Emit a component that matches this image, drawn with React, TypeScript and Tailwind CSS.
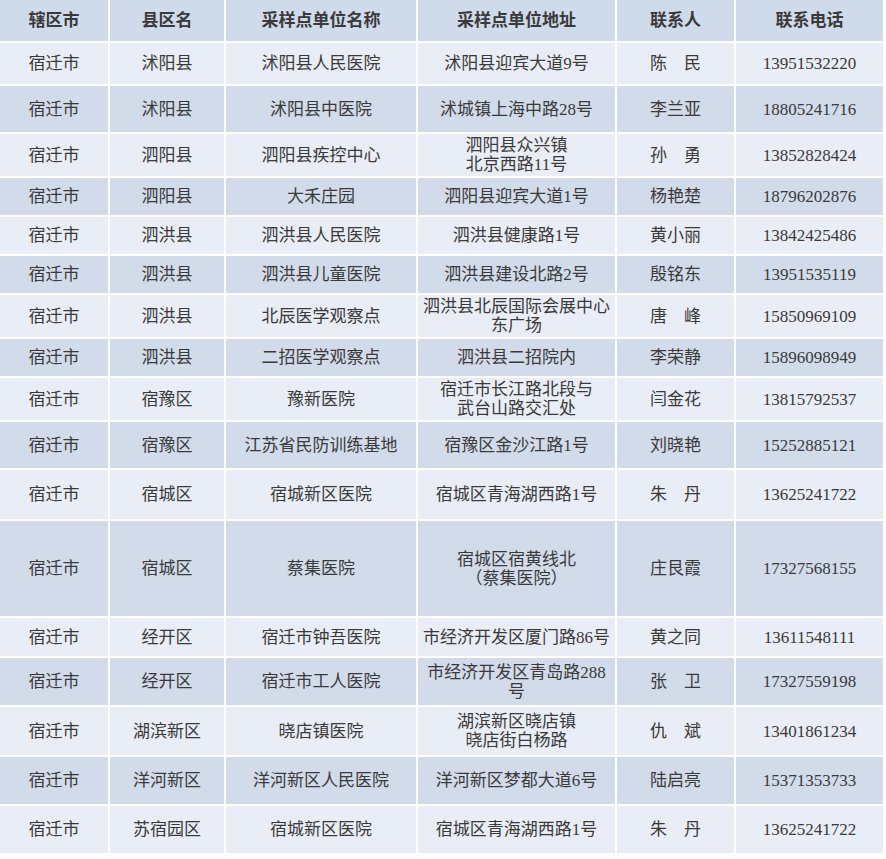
import React from "react";

const header = ["辖区市", "县区名", "采样点单位名称", "采样点单位地址", "联系人", "联系电话"];

const rows: string[][] = [
  ["宿迁市", "沭阳县", "沭阳县人民医院", "沭阳县迎宾大道9号", "陈\u3000民", "13951532220"],
  ["宿迁市", "沭阳县", "沭阳县中医院", "沭城镇上海中路28号", "李兰亚", "18805241716"],
  ["宿迁市", "泗阳县", "泗阳县疾控中心", "泗阳县众兴镇\n北京西路11号", "孙\u3000勇", "13852828424"],
  ["宿迁市", "泗阳县", "大禾庄园", "泗阳县迎宾大道1号", "杨艳楚", "18796202876"],
  ["宿迁市", "泗洪县", "泗洪县人民医院", "泗洪县健康路1号", "黄小丽", "13842425486"],
  ["宿迁市", "泗洪县", "泗洪县儿童医院", "泗洪县建设北路2号", "殷铭东", "13951535119"],
  ["宿迁市", "泗洪县", "北辰医学观察点", "泗洪县北辰国际会展中心\n东广场", "唐\u3000峰", "15850969109"],
  ["宿迁市", "泗洪县", "二招医学观察点", "泗洪县二招院内", "李荣静", "15896098949"],
  ["宿迁市", "宿豫区", "豫新医院", "宿迁市长江路北段与\n武台山路交汇处", "闫金花", "13815792537"],
  ["宿迁市", "宿豫区", "江苏省民防训练基地", "宿豫区金沙江路1号", "刘晓艳", "15252885121"],
  ["宿迁市", "宿城区", "宿城新区医院", "宿城区青海湖西路1号", "朱\u3000丹", "13625241722"],
  ["宿迁市", "宿城区", "蔡集医院", "宿城区宿黄线北\n（蔡集医院）", "庄艮霞", "17327568155"],
  ["宿迁市", "经开区", "宿迁市钟吾医院", "市经济开发区厦门路86号", "黄之同", "13611548111"],
  ["宿迁市", "经开区", "宿迁市工人医院", "市经济开发区青岛路288\n号", "张\u3000卫", "17327559198"],
  ["宿迁市", "湖滨新区", "晓店镇医院", "湖滨新区晓店镇\n晓店街白杨路", "仇\u3000斌", "13401861234"],
  ["宿迁市", "洋河新区", "洋河新区人民医院", "洋河新区梦都大道6号", "陆启亮", "15371353733"],
  ["宿迁市", "苏宿园区", "宿城新区医院", "宿城区青海湖西路1号", "朱\u3000丹", "13625241722"],
];

function Cell({ text, dark, head }: { text: string; dark?: boolean; head?: boolean }) {
  const lines = text.split("\n");
  return (
    <div
      className={
        "flex flex-col items-center justify-center text-center whitespace-nowrap leading-[19px] " +
        (head ? "bg-[#cfdaea] font-semibold" : dark ? "bg-[#d1dbea]" : "bg-[#e9edf5]")
      }
    >
      {lines.map((l, i) => (
        <span key={i}>{l}</span>
      ))}
    </div>
  );
}

export default function App() {
  return (
    <div className="w-[886px] h-[859px] bg-white text-[17px] text-[#3a3a3a] font-['Liberation_Serif','Noto_Sans_CJK_SC',serif]">
      <div className="grid w-[883px] grid-cols-[108px_114px_190px_197px_117px_147px] grid-rows-[41px_41px_46px_42px_37px_37px_37px_42px_37px_42px_46px_49px_95px_38px_47px_48px_47px_47px] gap-[2px]">
        {header.map((t, i) => (
          <Cell key={`h${i}`} text={t} head />
        ))}
        {rows.map((r, ri) =>
          r.map((t, ci) => <Cell key={`${ri}-${ci}`} text={t} dark={ri % 2 === 1} />)
        )}
      </div>
    </div>
  );
}
